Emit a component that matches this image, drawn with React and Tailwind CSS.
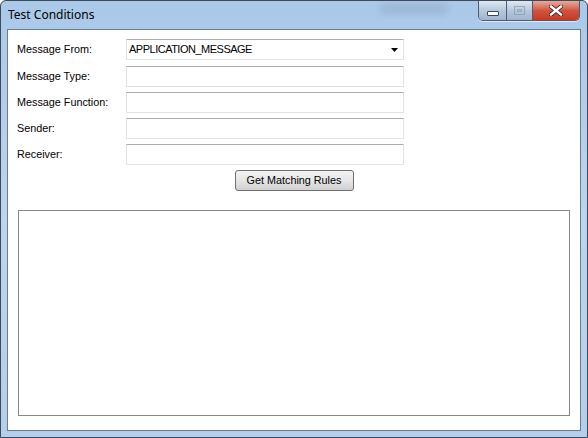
import React from 'react';

const fields = [
  { label: 'Message From:', value: 'APPLICATION_MESSAGE', combo: true },
  { label: 'Message Type:', value: '' },
  { label: 'Message Function:', value: '' },
  { label: 'Sender:', value: '' },
  { label: 'Receiver:', value: '' },
];

const CaptionButtons = () => (
  <div className="absolute right-[7px] top-0 flex h-[20px] overflow-hidden rounded-b-[5px] border border-t-0 border-[#4b5c73] shadow-[0_1px_0_rgba(255,255,255,0.6)]">
    <div className="flex w-[28px] items-center justify-center border-r border-[#4b5c73] bg-gradient-to-b from-[#dfe8f2] via-[#b7c8dc] to-[#9fb4cd]">
      <div className="mt-[5px] h-[5px] w-[12px] rounded-[1px] border border-[#35475e] bg-white" />
    </div>
    <div className="flex w-[26px] items-center justify-center border-r border-[#4b5c73] bg-gradient-to-b from-[#dfe8f2] via-[#b7c8dc] to-[#9fb4cd]">
      <div className="flex h-[9px] w-[11px] items-center justify-center border border-[#8a98a9] opacity-70">
        <div className="h-[3px] w-[5px] border border-[#8a98a9]" />
      </div>
    </div>
    <div className="flex w-[46px] items-center justify-center bg-gradient-to-b from-[#e9a99b] via-[#d2533e] to-[#c43a22]">
      <svg width="14" height="11" viewBox="0 0 14 11">
        <path d="M2 1.5 L12 9.5 M12 1.5 L2 9.5" stroke="#3a1a14" strokeWidth="4" strokeLinecap="square" />
        <path d="M2 1.5 L12 9.5 M12 1.5 L2 9.5" stroke="#ffffff" strokeWidth="2.4" strokeLinecap="square" />
      </svg>
    </div>
  </div>
);

const TextBox = ({ value, combo }) => (
  <div className="relative flex h-[21px] w-[278px] items-center border border-[#e2e3ea] border-t-[#abadb3] bg-white pl-[2px]">
    <span className="text-[11px] tracking-[-0.5px] text-black">{value}</span>
    {combo && (
      <svg className="absolute right-[5px] top-[8px]" width="7" height="4" viewBox="0 0 7 4">
        <path d="M0 0 H7 L3.5 4 Z" fill="#000" />
      </svg>
    )}
  </div>
);

export default function App() {
  return (
    <div
      className="relative h-[438px] w-[588px] overflow-hidden rounded-t-[6px] border border-[#3c4a5c] bg-gradient-to-b from-[#aac8e8] via-[#bcd5ee] to-[#b4cfeb]"
      style={{ fontFamily: '"Liberation Sans", Arial, sans-serif' }}
    >
      <div className="flex h-[28px] items-center pl-[7px]">
        <span
          className="text-[12px] text-black"
          style={{ fontFamily: '"Noto Sans", "Open Sans", sans-serif' }}
        >
          Test Conditions
        </span>
      </div>
      <div className="pointer-events-none absolute left-[378px] top-[2px] h-[12px] w-[70px] rounded-full bg-[#8aa4c0] opacity-40 blur-[3px]" />
      <CaptionButtons />

      <div className="mx-[6px] flex h-[402px] flex-col border border-[#6c7b8d] bg-white">
        <div className="flex flex-col pl-[9px] pt-[9px]">
          {fields.map((f, i) => (
            <div
              key={f.label}
              className={`flex items-center ${i === 0 ? 'mb-[6px]' : 'mb-[5px]'}`}
            >
              <span className="w-[109px] text-[10.8px] text-black">{f.label}</span>
              <TextBox value={f.value} combo={f.combo} />
            </div>
          ))}
        </div>

        <div className="flex justify-center">
          <button className="h-[21px] w-[119px] rounded-[3px] border border-[#707070] bg-gradient-to-b from-[#f2f2f2] via-[#e6e6e6] to-[#d0d0d0] text-[10.8px] text-black">
            Get Matching Rules
          </button>
        </div>

        <div className="mx-[10px] mt-[19px] h-[206px] border border-[#828790] bg-white" />
      </div>
    </div>
  );
}
